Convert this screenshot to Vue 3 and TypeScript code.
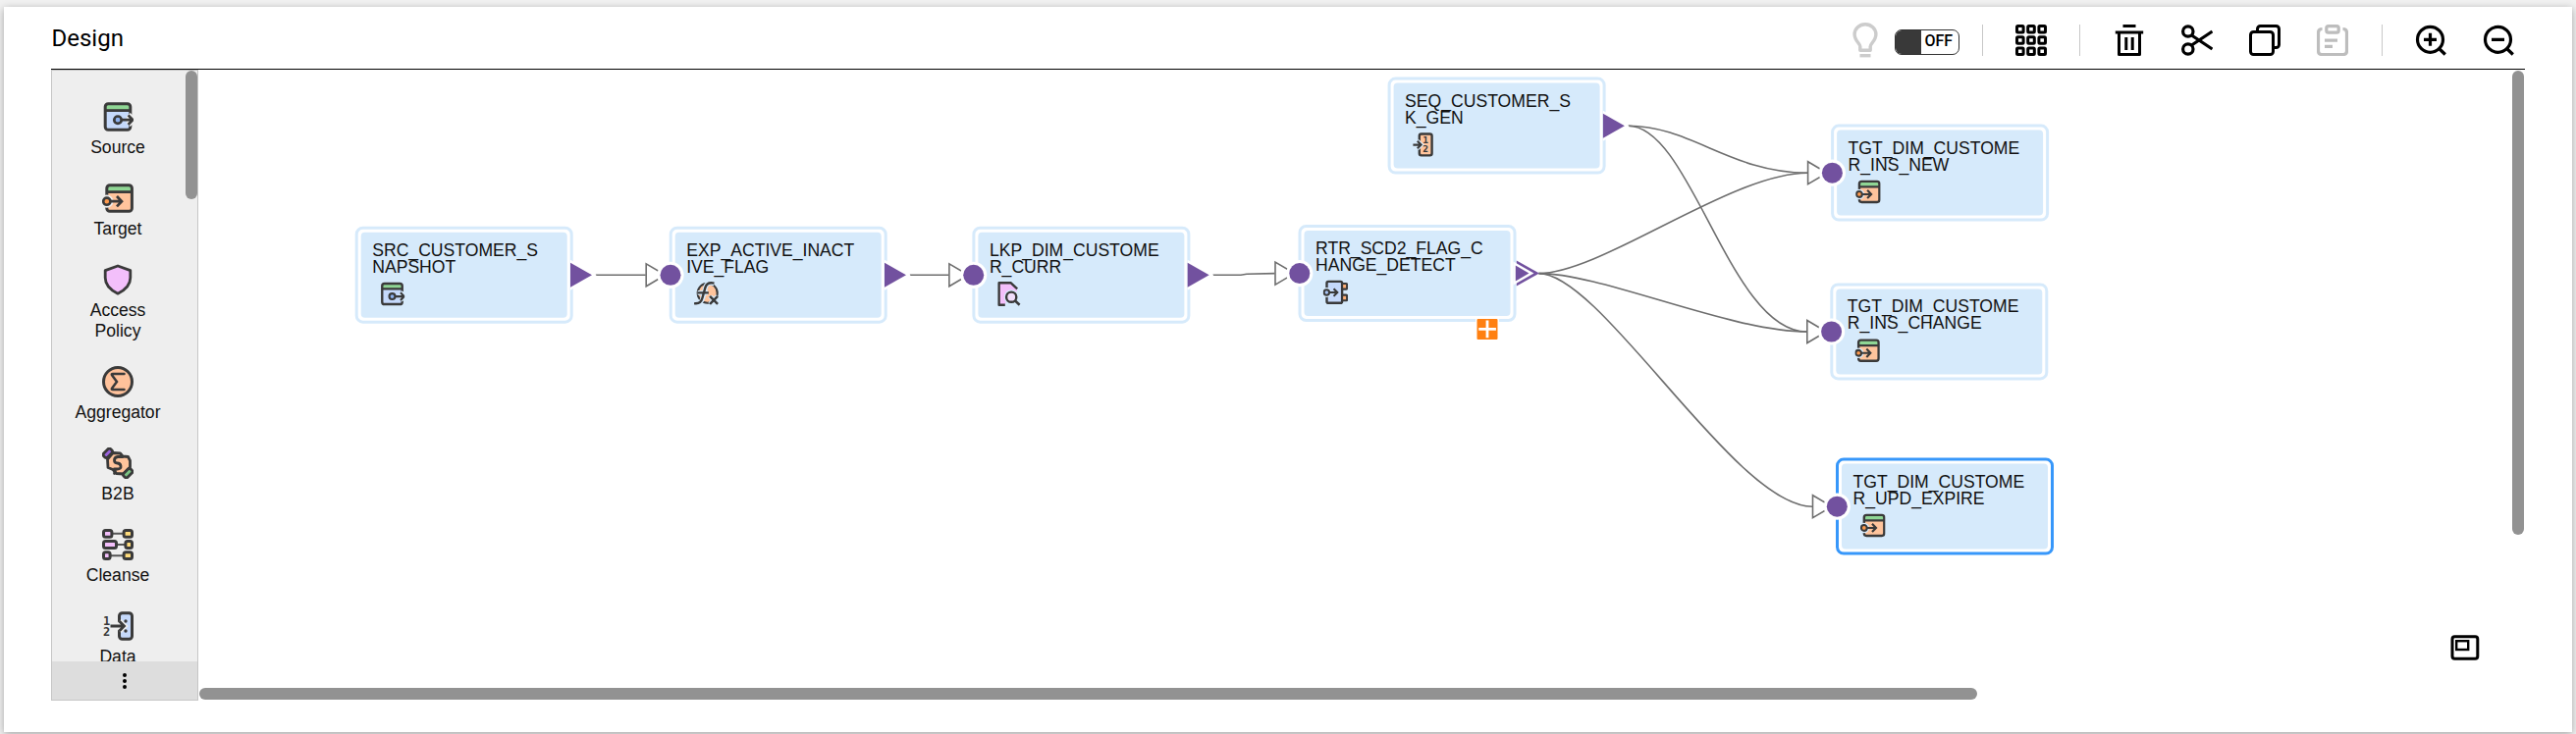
<script setup lang="ts">
interface PaletteItem { label: string; icon: string }
interface FlowNode {
  id: string
  lines: [string, string]
  icon: string
  x: number
  y: number
  input: boolean
  output: 'single' | 'group' | 'none'
  selected?: boolean
}
interface Tool { name: string; disabled?: boolean }
interface Digit { x: number; y: number; value: string }

const palette: PaletteItem[] = [
  { label: 'Source', icon: 'source' },
  { label: 'Target', icon: 'target' },
  { label: 'Access Policy', icon: 'shield' },
  { label: 'Aggregator', icon: 'sigma' },
  { label: 'B2B', icon: 'b2b' },
  { label: 'Cleanse', icon: 'cleanse' },
  { label: 'Data', icon: 'data' },
]

// Numerals that sit on top of an icon's shapes.
const iconDigits: Record<string, Digit[]> = {
  data: [{ x: 1, y: 15, value: '1' }, { x: 1, y: 26, value: '2' }],
  sequence: [{ x: 13.3, y: 14, value: '1' }, { x: 13.3, y: 25.5, value: '2' }],
}

const editTools: Tool[] = [
  { name: 'trash' },
  { name: 'cut' },
  { name: 'copy' },
  { name: 'paste', disabled: true },
]
const zoomTools: Tool[] = [{ name: 'zoom-in' }, { name: 'zoom-out' }]

// Node positions are relative to the canvas origin.
const nodes: FlowNode[] = [
  { id: 'src', lines: ['SRC_CUSTOMER_S', 'NAPSHOT'], icon: 'source', x: 159.7, y: 159.7, input: false, output: 'single' },
  { id: 'exp', lines: ['EXP_ACTIVE_INACT', 'IVE_FLAG'], icon: 'expression', x: 479.7, y: 159.7, input: true, output: 'single' },
  { id: 'lkp', lines: ['LKP_DIM_CUSTOME', 'R_CURR'], icon: 'lookup', x: 788.4, y: 159.7, input: true, output: 'single' },
  { id: 'rtr', lines: ['RTR_SCD2_FLAG_C', 'HANGE_DETECT'], icon: 'router', x: 1120.5, y: 158, input: true, output: 'group' },
  { id: 'seq', lines: ['SEQ_CUSTOMER_S', 'K_GEN'], icon: 'sequence', x: 1211.6, y: 7.6, input: false, output: 'single' },
  { id: 'new', lines: ['TGT_DIM_CUSTOME', 'R_INS_NEW'], icon: 'target', x: 1663.1, y: 55.6, input: true, output: 'none' },
  { id: 'chg', lines: ['TGT_DIM_CUSTOME', 'R_INS_CHANGE'], icon: 'target', x: 1662.3, y: 217.4, input: true, output: 'none' },
  { id: 'upd', lines: ['TGT_DIM_CUSTOME', 'R_UPD_EXPIRE'], icon: 'target', x: 1668, y: 395.6, input: true, output: 'none', selected: true },
]

const links: [string, string][] = [
  ['src', 'exp'], ['exp', 'lkp'], ['lkp', 'rtr'],
  ['rtr', 'new'], ['rtr', 'chg'], ['rtr', 'upd'],
  ['seq', 'new'], ['seq', 'chg'],
]

const find = (id: string): FlowNode => nodes.find((n) => n.id === id)!

function linkPath([from, to]: [string, string]): string {
  const a = find(from)
  const b = find(to)
  const x1 = a.x + 245
  const y1 = a.y + 49.6
  const x2 = b.x - 24
  const y2 = b.y + 49.6
  if (x2 - x1 < 90) {
    const m = (x1 + x2) / 2
    return `M${x1} ${y1}H${m - 3}L${m + 3} ${y2 + (y1 - y2) * 0.4}L${x2} ${y2}`
  }
  return `M${x1} ${y1}C${x1 + 64} ${y1} ${x2 - 78} ${y2} ${x2} ${y2}`
}
</script>

<template>
  <svg class="defs" width="0" height="0" aria-hidden="true">
    <symbol id="i-source" viewBox="0 0 32 32">
      <path d="M3 9.5h26V26a3 3 0 0 1-3 3H6a3 3 0 0 1-3-3z" fill="#c5d9fb" />
      <path d="M3 9V6a3 3 0 0 1 3-3h20a3 3 0 0 1 3 3v3z" fill="#8fd694" />
      <rect x="3.2" y="2.8" width="25.6" height="26.4" rx="3" fill="none" stroke="#3a3a3a" stroke-width="3" />
      <path d="M3 9.6h26" stroke="#3a3a3a" stroke-width="2.8" />
      <path d="M25 19h7M26.5 14l5 5-5 5" fill="none" stroke="currentColor" stroke-width="6" />
      <circle cx="16" cy="19.2" r="3.7" fill="#8db2f0" stroke="#3a3a3a" stroke-width="2.7" />
      <path d="M20 19.2h11M26.6 14.4l4.6 4.8-4.6 4.8" fill="none" stroke="#3a3a3a" stroke-width="2.7" />
    </symbol>
    <symbol id="i-target" viewBox="0 0 32 32">
      <path d="M4.5 9.5h26V26a3 3 0 0 1-3 3h-20a3 3 0 0 1-3-3z" fill="#ffc49c" />
      <path d="M4.5 9V6a3 3 0 0 1 3-3h20a3 3 0 0 1 3 3v3z" fill="#8fd694" />
      <rect x="4.8" y="2.8" width="25.6" height="26.4" rx="3" fill="none" stroke="#3a3a3a" stroke-width="3" />
      <path d="M5 9.6h26" stroke="#3a3a3a" stroke-width="2.8" />
      <circle cx="4.8" cy="19.2" r="6.6" fill="currentColor" />
      <circle cx="4.8" cy="19.2" r="3.6" fill="#ff9a4d" stroke="#3a3a3a" stroke-width="2.6" />
      <path d="M8.8 19.2h11M15 14l5 5.2-5 5.2" fill="none" stroke="#3a3a3a" stroke-width="2.7" />
    </symbol>
    <symbol id="i-shield" viewBox="0 0 32 32">
      <path d="M16 2l12.8 4.6V14c0 7.6-5.4 12.6-12.8 16.2C8.6 26.6 3.2 21.6 3.2 14V6.6z" fill="#f3bffb" stroke="#3a3a3a" stroke-width="2.8" stroke-linejoin="round" />
    </symbol>
    <symbol id="i-sigma" viewBox="0 0 32 32">
      <circle cx="16" cy="16" r="14.5" fill="#ffc29b" stroke="#3a3a3a" stroke-width="3" />
      <path d="M22.5 8H11q-2 0-.8 1.6L15 16l-4.800 6.4Q9 24 11 24h11.5" fill="none" stroke="#3a3a3a" stroke-width="2.5" stroke-linecap="round" />
    </symbol>
    <symbol id="i-b2b" viewBox="0 0 32 32">
      <path d="M5.500 12L11 5.500l7.500.5 2.500 3 5.500.5 2 4v6.500l-6.500 7-7.500-.5-3.500-4L6 20.500z" fill="#ffc49c" stroke="#3a3a3a" stroke-width="2.8" stroke-linejoin="round" />
      <rect x="-5" y="-2.800" width="10" height="5.600" rx="2" transform="translate(5.800 5.800) rotate(-45)" fill="#9a63dd" stroke="#3a3a3a" stroke-width="2.8" />
      <rect x="-5" y="-2.800" width="10" height="5.600" rx="2" transform="translate(26.200 26.200) rotate(-45)" fill="#7cc585" stroke="#3a3a3a" stroke-width="2.8" />
      <path d="M21 9.500h-5q-3.500.5-3.500 3.500t3 3 3.500 3-3.500 3h-3M12.500 26.500l1-4" fill="none" stroke="#3a3a3a" stroke-width="2.8" stroke-linecap="round" />
    </symbol>
    <symbol id="i-cleanse" viewBox="0 0 32 32">
      <path d="M10 4.800h12M15 16h8M9 27.200h13" stroke="#555" stroke-width="2" />
      <g stroke="#3a3a3a" stroke-width="3">
        <rect x="1.5" y="1.5" width="8.4" height="6.8" rx="2" fill="#f3bffb" />
        <rect x="1.5" y="12.6" width="13" height="6.8" rx="2" fill="#f3bffb" />
        <rect x="1.5" y="23.7" width="6.6" height="6.8" rx="2" fill="#f3bffb" />
        <rect x="22.1" y="1.5" width="8.4" height="6.8" rx="2" fill="#ffdc7c" />
        <rect x="23.9" y="12.6" width="6.6" height="6.8" rx="2" fill="#ffdc7c" />
        <rect x="22.1" y="23.7" width="8.4" height="6.8" rx="2" fill="#ffdc7c" />
      </g>
    </symbol>
    <symbol id="i-data" viewBox="0 0 32 32">
      <rect x="17.5" y="2.8" width="13" height="26.4" rx="3" fill="#c5d9fb" stroke="#3a3a3a" stroke-width="3" />
      <path d="M9 16h13M17.5 11l5 5-5 5" fill="none" stroke="currentColor" stroke-width="6" />
      <path d="M8.5 16h13.5M17.5 11l5 5-5 5" fill="none" stroke="#3a3a3a" stroke-width="2.8" />
      <circle cx="24" cy="11" r="1.7" fill="#3a3a3a" /><circle cx="24" cy="21" r="1.7" fill="#3a3a3a" />
    </symbol>
    <symbol id="i-expression" viewBox="0 0 32 32">
      <circle cx="17.500" cy="15" r="12.5" fill="#ffc49c" stroke="#3a3a3a" stroke-width="2.6" />
      <path d="M1 28c6 1 9-1 10.500-7L15 7.500C16.500 2.500 20 1 26 3M5 14.600h13M20.500 19l10 10M30.500 19L20.500 29" fill="none" stroke="currentColor" stroke-width="6" />
      <path d="M18.500 6.500q6.500 0 9 5l.5 5-5.500 1.500-3-1z" fill="#ffc49c" />
      <path d="M.5 28c6 1 9-1 10.500-7L14.600 8C16 3 19.500 1 26 2.500M5 14.600h14M20.500 19l10 10M30.500 19L20.500 29" fill="none" stroke="#3a3a3a" stroke-width="3" />
    </symbol>
    <symbol id="i-lookup" viewBox="0 0 32 32">
      <path d="M2.500 2H18l7.500 7v18L3 30z" fill="#f3bffb" />
      <path d="M10.500 30H2.800V2H18l8 7.500" fill="none" stroke="#3a3a3a" stroke-width="3" stroke-linejoin="round" />
      <circle cx="18.5" cy="20" r="9.3" fill="currentColor" />
      <path d="M11 27h17v5H11z" fill="currentColor" />
      <circle cx="18.5" cy="20" r="6.4" fill="#f1ddfb" stroke="#3a3a3a" stroke-width="3" />
      <path d="M23 24.500l6 5.500" stroke="#3a3a3a" stroke-width="3.2" />
    </symbol>
    <symbol id="i-router" viewBox="0 0 32 32">
      <rect x="5" y="2.3" width="19.5" height="27.4" rx="2" fill="#c5d9fb" stroke="#3a3a3a" stroke-width="3" />
      <rect x="24.5" y="5" width="6.3" height="7" rx="1" fill="#ffb078" stroke="#3a3a3a" stroke-width="2.6" />
      <rect x="24.5" y="19.5" width="6.3" height="7" rx="1" fill="#ffb078" stroke="#3a3a3a" stroke-width="2.6" />
      <circle cx="4.8" cy="16.3" r="6.3" fill="currentColor" />
      <circle cx="4.8" cy="16.3" r="3.4" fill="#a9c5f5" stroke="#3a3a3a" stroke-width="2.5" />
      <path d="M8.500 16.300h10M13.800 11.500l4.700 4.800-4.700 4.800" fill="none" stroke="#3a3a3a" stroke-width="2.6" />
    </symbol>
    <symbol id="i-sequence" viewBox="0 0 32 32">
      <rect x="9" y="2.3" width="16" height="27.4" rx="2.5" fill="#ffc49c" stroke="#3a3a3a" stroke-width="3" />
      <path d="M1 16.200h10M6 11.500l5 4.700-5 4.700" fill="none" stroke="currentColor" stroke-width="6" />
      <path d="M1 16.200h10M6.500 11.500l4.700 4.700-4.700 4.700" fill="none" stroke="#3a3a3a" stroke-width="2.7" />
    </symbol>

    <symbol id="t-grid" viewBox="0 0 32 32">
      <g fill="none" stroke="#000" stroke-width="3">
        <rect x="1.5" y="1.5" width="6.6" height="6.6" rx="1" /><rect x="12.7" y="1.5" width="6.6" height="6.6" rx="1" /><rect x="23.9" y="1.5" width="6.6" height="6.6" rx="1" />
        <rect x="1.5" y="12.7" width="6.6" height="6.6" rx="1" /><rect x="12.7" y="12.7" width="6.6" height="6.6" rx="1" /><rect x="23.9" y="12.7" width="6.6" height="6.6" rx="1" />
        <rect x="1.5" y="23.9" width="6.6" height="6.6" rx="1" /><rect x="12.7" y="23.9" width="6.6" height="6.6" rx="1" /><rect x="23.9" y="23.9" width="6.6" height="6.6" rx="1" />
      </g>
    </symbol>
    <symbol id="t-trash" viewBox="0 0 32 32">
      <path d="M9.500 1.500h13M1.800 7.900h28.400M5.500 8v22.500h21V8M12.800 13v13M19.200 13v13" fill="none" stroke="#000" stroke-width="3" stroke-linejoin="round" />
    </symbol>
    <symbol id="t-cut" viewBox="0 0 32 32">
      <g fill="none" stroke="#000" stroke-width="3.2">
        <circle cx="6.8" cy="7" r="5.2" /><circle cx="6.8" cy="25" r="5.2" />
        <path d="M10.500 11L31.500 25M10.500 21L31.500 7" />
      </g>
    </symbol>
    <symbol id="t-copy" viewBox="0 0 32 32">
      <path d="M8.500 7V4.500a3 3 0 0 1 3-3h16a3 3 0 0 1 3 3v16a3 3 0 0 1-3 3H24.500" fill="none" stroke="#000" stroke-width="3" />
      <rect x="1.5" y="7.5" width="23" height="23" rx="3" fill="none" stroke="#000" stroke-width="3" />
    </symbol>
    <symbol id="t-paste" viewBox="0 0 32 32">
      <g fill="none" stroke="#bdbdbd" stroke-width="3.2">
        <path d="M5.500 4.500q-4 0-4 4v18.500q0 3.500 3.500 3.500h22q3.500 0 3.500-3.500V8.500q0-4-4-4" />
        <rect x="9.8" y="1.6" width="12.4" height="6.6" rx="2" />
        <path d="M8 16.200h13M8 22.400h8" />
      </g>
    </symbol>
    <symbol id="t-zoom-in" viewBox="0 0 32 32">
      <circle cx="15.5" cy="15.3" r="13" fill="none" stroke="#000" stroke-width="3.2" />
      <path d="M9 15.300h13M15.500 8.800v13M24.500 24.500l6.300 6" stroke="#000" stroke-width="3.2" />
    </symbol>
    <symbol id="t-zoom-out" viewBox="0 0 32 32">
      <circle cx="15.5" cy="15.3" r="13" fill="none" stroke="#000" stroke-width="3.2" />
      <path d="M9 15.300h13M24.500 24.500l6.300 6" stroke="#000" stroke-width="3.2" />
    </symbol>
  </svg>

  <main class="page">
    <section class="card">
      <header class="header">
        <h1 class="title">Design</h1>
        <div class="toolbar">
          <svg class="bulb" viewBox="0 0 26 36" width="26" height="36">
            <path d="M7.800 28.300h10.400v-4c0-3 5.700-6 5.700-12.400a10.900 10.200 0 0 0-21.800 0c0 6.400 5.700 9.400 5.700 12.400z" fill="none" stroke="#cccccc" stroke-width="3.4" stroke-linejoin="round" />
            <path d="M7.500 33.700h11" stroke="#cccccc" stroke-width="3.4" />
          </svg>
          <div class="toggle"><span class="knob"></span><span class="off">OFF</span></div>
          <i class="sep sep-a"></i>
          <svg class="tool"><use href="#t-grid" /></svg>
          <i class="sep sep-b"></i>
          <div class="group">
            <svg v-for="t in editTools" :key="t.name" class="tool"><use :href="'#t-' + t.name" /></svg>
          </div>
          <i class="sep sep-c"></i>
          <div class="group">
            <svg v-for="t in zoomTools" :key="t.name" class="tool"><use :href="'#t-' + t.name" /></svg>
          </div>
        </div>
      </header>

      <div class="body">
        <aside class="palette">
          <div class="list">
            <div v-for="p in palette" :key="p.label" class="entry">
              <svg class="entry-icon" viewBox="0 0 32 32">
                <use :href="'#i-' + p.icon" width="32" height="32" />
                <text v-for="d in iconDigits[p.icon]" :key="d.value" class="digit" :x="d.x" :y="d.y">{{ d.value }}</text>
              </svg>
              <span class="entry-label">{{ p.label }}</span>
            </div>
          </div>
          <span class="palette-scroll"></span>
          <div class="more"><i></i><i></i><i></i></div>
        </aside>

        <div class="canvas">
          <div
            v-for="n in nodes"
            :key="n.id"
            class="node"
            :class="{ selected: n.selected }"
            :style="{ transform: `translate(${n.x}px, ${n.y}px)` }"
          >
            <div class="node-body">
              <div class="node-text"><div v-for="l in n.lines" :key="l">{{ l }}</div></div>
              <svg class="node-icon" viewBox="0 0 32 32">
                <use :href="'#i-' + n.icon" width="32" height="32" />
                <text v-for="d in iconDigits[n.icon]" :key="d.value" class="digit" :x="d.x" :y="d.y">{{ d.value }}</text>
              </svg>
            </div>
          </div>

          <svg class="wires" width="2369" height="643">
            <path v-for="l in links" :key="l.join('-')" :d="linkPath(l)" fill="none" stroke="#6e6e6e" stroke-width="1.6" />
            <g v-for="n in nodes" :key="n.id" :transform="`translate(${n.x} ${n.y + 49.6})`">
              <template v-if="n.input">
                <path d="M-23.500 -11.500V11.500L-4 0z" fill="#fff" stroke="#6e6e6e" stroke-width="1.6" />
                <circle cx="1.3" r="13.6" fill="#fff" />
                <circle cx="1.3" r="10.5" fill="#72519f" />
              </template>
              <template v-if="n.output === 'single'">
                <path d="M219.300 -15.500L246 0L219.300 15.500z" fill="#fff" />
                <path d="M219.300 -12.500L241.300 0L219.300 12.500z" fill="#72519f" />
              </template>
              <template v-if="n.output === 'group'">
                <path d="M222.300 -13L245.500 0L222.300 13z" fill="#72519f" />
                <path d="M219 -12V12L240 0z" fill="#fff" />
                <path d="M221.300 -8L235 0L221.300 8z" fill="#72519f" />
                <rect x="180.500" y="45.500" width="24" height="23" rx="2" fill="#fff" />
                <rect x="182" y="46.300" width="21" height="21" rx="1" fill="#ff8011" />
                <path d="M183.800 56.800h17.600M192.500 48v17.600" stroke="#fff" stroke-width="2.8" />
              </template>
            </g>
          </svg>

          <span class="bar-v"></span>
          <span class="bar-h"></span>
          <svg class="overview" viewBox="0 0 30 26" width="30" height="26">
            <rect x="2" y="1.800" width="25.8" height="22.4" rx="2.5" fill="none" stroke="#000" stroke-width="3" />
            <rect x="6.2" y="6.2" width="12" height="8.8" fill="none" stroke="#000" stroke-width="2.4" />
          </svg>
        </div>
      </div>
    </section>
  </main>
</template>

<style>
html, body { margin: 0; background: #f1f1f1; overflow: hidden; }
</style>

<style scoped>
.defs { position: absolute; }
.page {
  box-sizing: border-box;
  width: 2624px;
  height: 748px;
  padding: 7px 4px 2px;
  overflow: hidden;
  background: #f1f1f1;
}
.card {
  box-sizing: border-box;
  height: 739px;
  padding: 0 48px;
  background: #fff;
  box-shadow: 0 2px 8px rgba(0, 0, 0, 0.32);
}
.header {
  box-sizing: border-box;
  display: flex;
  justify-content: space-between;
  height: 64px;
  border-bottom: 1px solid #000;
}
.title {
  margin: 18px 0 0 0.5px;
  font: 400 24px/28px Roboto, sans-serif;
  color: #000;
}
.toolbar { display: flex; align-items: center; height: 68px; margin-right: 11px; }
.bulb { margin: 0 17px 0 0; }
.toggle {
  box-sizing: border-box;
  display: flex;
  width: 66px;
  height: 26px;
  margin: 3px 23px 0 0;
  border: 1px solid #333;
  border-radius: 7px;
  overflow: hidden;
  background: #fff;
}
.knob { width: 26px; background: #393939; }
.off { flex: 1; padding-left: 3.5px; font: 500 16px/22px Roboto, sans-serif; color: #000; }
.sep { width: 1px; height: 32px; background: #c8c8c8; }
.sep-a { margin-right: 33px; }
.sep-b { margin: 0 34px 0 33px; }
.sep-c { margin: 0 33px 0 34px; }
.tool { width: 32px; height: 32px; }
.group { display: flex; gap: 37px; }

.body { display: flex; height: 643px; }
.palette {
  position: relative;
  box-sizing: border-box;
  display: flex;
  flex-direction: column;
  width: 150px;
  border: 1px solid #c6c6c6;
  background: #eee;
}
.list {
  display: flex;
  flex: 1;
  flex-direction: column;
  gap: 24px;
  align-items: center;
  width: 134px;
  min-height: 0;
  padding-top: 31px;
  overflow: hidden;
  box-sizing: border-box;
}
.entry { display: flex; flex: none; flex-direction: column; align-items: center; gap: 5px; width: 92px; color: #eee; }
.entry-icon { width: 32px; height: 32px; }
.entry-label {
  font: 17.6px/21.8px "Liberation Sans", Arial, sans-serif;
  text-align: center;
  color: #111;
}
.digit { font: 700 12px "DejaVu Sans Mono", monospace; fill: #3a3a3a; }
.palette-scroll {
  position: absolute;
  top: 0;
  right: 0;
  width: 12px;
  height: 131px;
  border-radius: 6px;
  background: #929292;
}
.more {
  display: flex;
  flex: none;
  flex-direction: column;
  align-items: center;
  gap: 2px;
  box-sizing: border-box;
  height: 39px;
  padding-top: 12px;
  background: #ddd;
}
.more i { width: 4px; height: 4px; border-radius: 50%; background: #000; }

.canvas { position: relative; flex: 1; overflow: hidden; }
.node {
  position: absolute;
  top: 0;
  left: 0;
  box-sizing: border-box;
  width: 222px;
  height: 99px;
  padding: 3px;
  border: 3px solid #d6eafb;
  border-radius: 8px;
  background: #fff;
}
.node.selected { border-color: #3797fa; }
.node-body {
  box-sizing: border-box;
  height: 100%;
  padding: 10px 0 0 11.5px;
  border-radius: 4px;
  background: #d6eafb;
  color: #d6eafb;
}
.node-text {
  font: 17.6px/17.4px "Liberation Sans", Arial, sans-serif;
  white-space: nowrap;
  color: #111;
}
.node-icon { display: block; width: 25.6px; height: 25.6px; margin: 5.200px 0 0 7.800px; }
.wires { position: absolute; top: 0; left: 0; }
.bar-v, .bar-h { position: absolute; border-radius: 6px; background: #929292; }
.bar-v { top: 1px; right: 1px; width: 12px; height: 473px; }
.bar-h { left: 1px; top: 630px; width: 1811px; height: 12px; }
.overview { position: absolute; left: 2294px; top: 576px; }
</style>
